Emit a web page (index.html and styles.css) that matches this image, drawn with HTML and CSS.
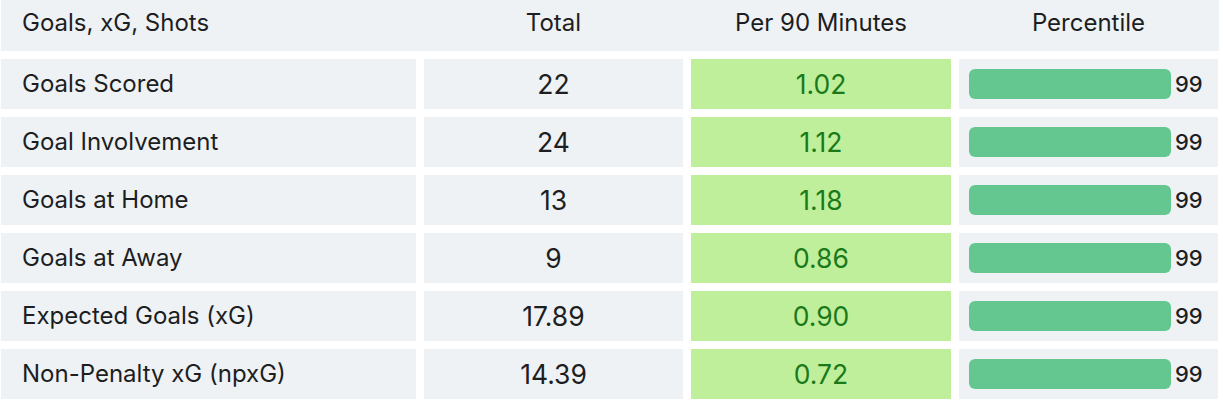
FILE: index.html
```html
<!DOCTYPE html>
<html>
<head>
<meta charset="utf-8">
<link rel="stylesheet" href="styles.css">
</head>
<body>
<div class="table">
  <div class="row head">
    <div class="cell label">Goals, xG, Shots</div>
    <div class="cell center">Total</div>
    <div class="cell center">Per 90 Minutes</div>
    <div class="cell center">Percentile</div>
  </div>
  <div class="row">
    <div class="cell label">Goals Scored</div>
    <div class="cell num">22</div>
    <div class="cell per">1.02</div>
    <div class="cell pct"><div class="bar" style="width:202px"></div><span class="pv">99</span></div>
  </div>
  <div class="row">
    <div class="cell label">Goal Involvement</div>
    <div class="cell num">24</div>
    <div class="cell per">1.12</div>
    <div class="cell pct"><div class="bar" style="width:202px"></div><span class="pv">99</span></div>
  </div>
  <div class="row">
    <div class="cell label">Goals at Home</div>
    <div class="cell num">13</div>
    <div class="cell per">1.18</div>
    <div class="cell pct"><div class="bar" style="width:202px"></div><span class="pv">99</span></div>
  </div>
  <div class="row">
    <div class="cell label">Goals at Away</div>
    <div class="cell num">9</div>
    <div class="cell per">0.86</div>
    <div class="cell pct"><div class="bar" style="width:202px"></div><span class="pv">99</span></div>
  </div>
  <div class="row">
    <div class="cell label">Expected Goals (xG)</div>
    <div class="cell num">17.89</div>
    <div class="cell per">0.90</div>
    <div class="cell pct"><div class="bar" style="width:202px"></div><span class="pv">99</span></div>
  </div>
  <div class="row">
    <div class="cell label">Non-Penalty xG (npxG)</div>
    <div class="cell num">14.39</div>
    <div class="cell per">0.72</div>
    <div class="cell pct"><div class="bar" style="width:202px"></div><span class="pv">99</span></div>
  </div>
</div>
</body>
</html>
```
FILE: styles.css
```css
html, body {
  margin: 0;
  padding: 0;
  background: #ffffff;
}
body {
  font-family: Inter, "Noto Sans", sans-serif;
  color: #1c1e22;
}
.table {
  display: flex;
  flex-direction: column;
  gap: 8px;
  width: 1218px;
  margin-left: 1px;
}
.row {
  display: grid;
  grid-template-columns: 415px 259px 260px 259px;
  column-gap: 8px;
  height: 50px;
}
.row.head {
  background: #eff2f5;
  height: 51px;
}
.cell {
  display: flex;
  align-items: center;
  background: #eff2f5;
  font-size: 24px;
  line-height: 1;
}
.head .cell {
  background: transparent;
  padding-bottom: 6px;
}
.label {
  padding-left: 21px;
}
.center {
  justify-content: center;
}
.num {
  justify-content: center;
  font-size: 26.5px;
}
.per {
  justify-content: center;
  background: #c0ef9c;
  color: #1a7a1a;
  font-size: 26.5px;
}
.pct {
  padding-left: 10px;
}
.bar {
  height: 30px;
  background: #64c78f;
  border-radius: 6px;
  flex: none;
}
.pv {
  font-size: 22px;
  font-weight: 500;
  margin-left: 4px;
}
```
